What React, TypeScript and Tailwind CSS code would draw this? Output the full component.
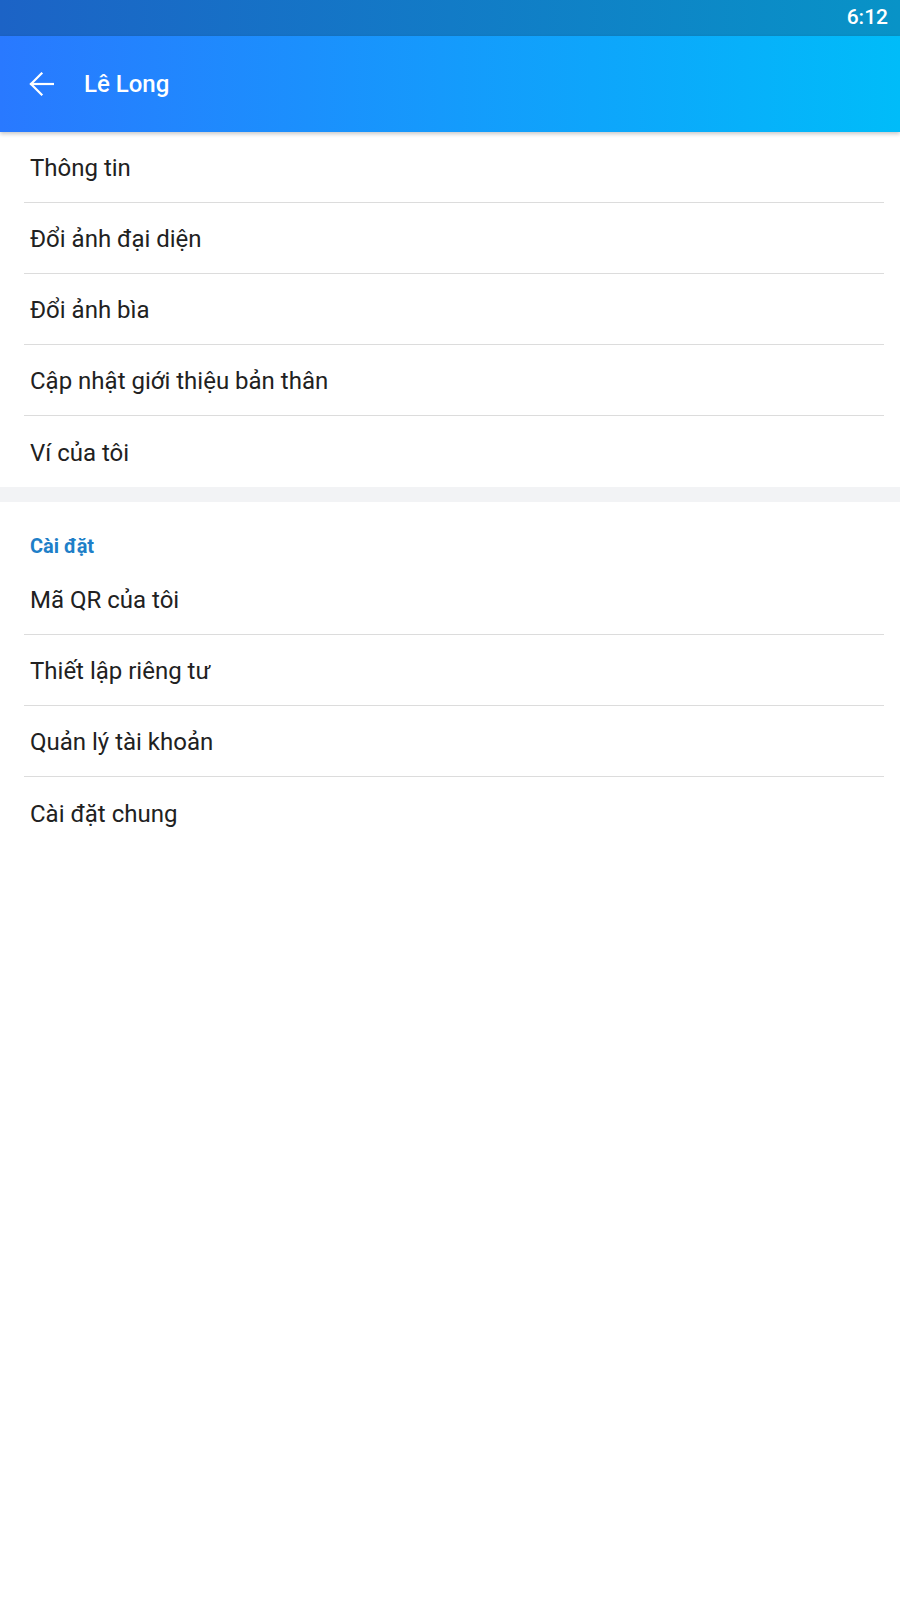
import { FC } from "react";

const profileItems = [
  "Thông tin",
  "Đổi ảnh đại diện",
  "Đổi ảnh bìa",
  "Cập nhật giới thiệu bản thân",
  "Ví của tôi",
];

const settingItems = [
  "Mã QR của tôi",
  "Thiết lập riêng tư",
  "Quản lý tài khoản",
  "Cài đặt chung",
];

const MenuList: FC<{ items: string[] }> = ({ items }) => (
  <ul className="ml-6 mr-4">
    {items.map((item, i) => (
      <li
        key={item}
        className={
          i < items.length - 1
            ? "h-[71px] flex items-center pl-[6px] pt-[2px] border-b border-[#dcdcdc] text-[24px] text-[#212121]"
            : "h-[71px] flex items-center pl-[6px] pt-[2px] text-[24px] text-[#212121]"
        }
      >
        {item}
      </li>
    ))}
  </ul>
);

export default function App() {
  return (
    <div className="w-[900px] min-h-[1600px] bg-white font-['Roboto','Noto_Sans',sans-serif]">
      {/* Status bar */}
      <div className="h-9 flex items-center justify-end pr-3 bg-[linear-gradient(90deg,#1c63c6,#0893c7)] text-white text-[21px] font-medium">
        6:12
      </div>
      {/* Toolbar */}
      <div className="relative z-10 h-24 flex items-center bg-[linear-gradient(90deg,#2979ff,#00bcf9)] shadow-[0_2px_4px_rgba(0,0,0,0.22)]">
        <button className="ml-[29px] w-[25px] h-6 flex items-center justify-center">
          <svg width="25" height="24" viewBox="0 0 25 24" fill="none" stroke="white" strokeWidth="2.2" strokeLinecap="square">
            <path d="M2 12H24" />
            <path d="M12.5 1.5L2 12l10.5 10.5" />
          </svg>
        </button>
        <h1 className="ml-[30px] text-white text-[24px] font-medium">Lê Long</h1>
      </div>

      <MenuList items={profileItems} />

      <div className="h-[15px] bg-[#f2f3f5]" />

      {/* Settings section */}
      <div className="pl-[30px] pt-8 pb-[6px] text-[20px] leading-6 font-bold text-[#1e7fc8]">Cài đặt</div>
      <MenuList items={settingItems} />
    </div>
  );
}
